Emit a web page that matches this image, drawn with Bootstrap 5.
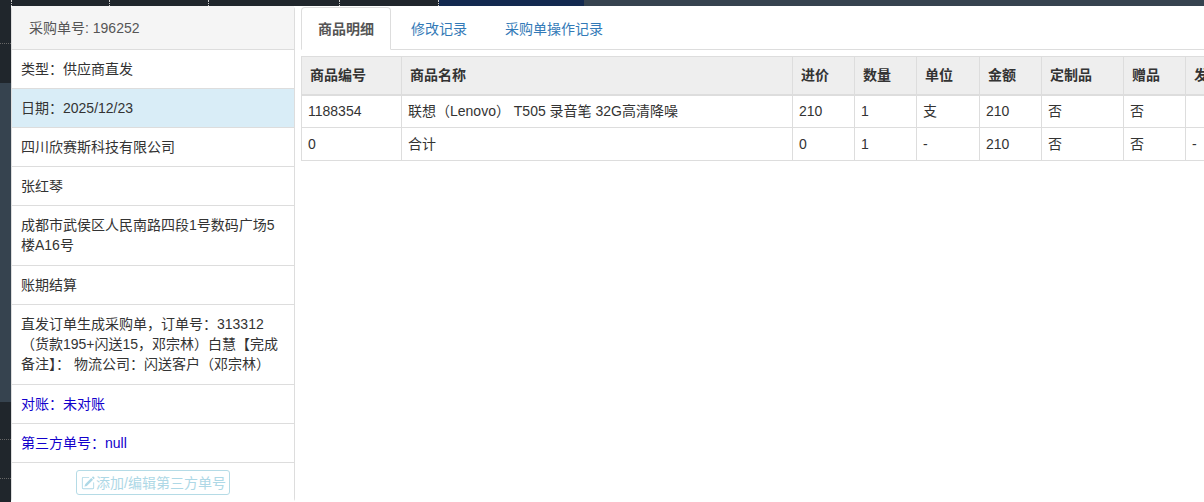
<!DOCTYPE html>
<html lang="en">
<head>
  <meta charset="UTF-8" />
  <meta name="viewport" content="width=device-width, initial-scale=1.0"/>
  <title>采购单详情</title>
  <link href="https://cdn.jsdelivr.net/npm/bootstrap@5.3.0/dist/css/bootstrap.min.css" rel="stylesheet" />
  <style>
    body {
      font-family: "Liberation Sans", "Noto Sans CJK SC", sans-serif;
      font-size: 14px;
      line-height: 20px;
      color: #333;
      background: #fff;
      height: 100vh;
      overflow: hidden;
    }
    /* background app showing round the dialog */
    .top-strip { height: 6px; flex: none; }
    .top-seg { background: #20262c; border-right: 1px dotted #ccc; }
    .seg-a { width: 12px; }
    .seg-b { width: 98px; }
    .seg-c { width: 99px; }
    .seg-d { width: 131px; }
    .seg-e { width: 99px; }
    .seg-navy { width: 145px; background: #13294f; }
    .seg-slate { background: #36434f; }
    .side-strip { width: 11px; flex: none; }
    .strip-dark { background: #20262c; }
    .strip-dots { border-bottom: 1px dotted #666; }
    .strip-slate { background: #36434f; }
    .s-38 { height: 38px; }
    .s-39 { height: 39px; }
    .s-319 { height: 319px; }

    .info-panel {
      width: 284px;
      flex: none;
      --bs-card-border-color: #ddd;
      --bs-card-border-radius: 4px;
      --bs-card-inner-border-radius: 3px;
      border-width: 0 1px 0 1px;
    }
    .info-head {
      background: #f5f5f5;
      padding: 11.5px 17px;
      border-bottom: 1px solid #ddd;
      color: #555;
    }
    .info-panel .list-group-item {
      padding: 9px;
      border-color: #ddd;
      color: #333;
    }
    .info-panel .list-group-item.info-multi { padding-bottom: 10px; }
    .info-panel .info-date { background: #d9edf7; }
    .info-panel .info-blue { color: #1200cc; }
    .edit-btn {
      font-size: 14px;
      line-height: 20px;
      padding: 1.5px 4px;
      width: 154px;
      border: 1px solid #b5dbe6;
      border-radius: 3px;
      background: #fff;
      white-space: nowrap;
    }
    .edit-btn:disabled { color: #aed8e6; border-color: #b5dbe6; opacity: 1; }
    .edit-btn svg { width: 14px; height: 14px; margin-right: 1px; vertical-align: -2px; fill: currentColor; }
    .info-panel .btn-wrap { padding-top: 7px; }

    .detail-pane { padding: 1px 0 0 6px; min-width: 0; }
    .detail-tabs { --bs-nav-tabs-border-color: #ddd; --bs-nav-tabs-border-radius: 4px; margin-bottom: 6px; flex-wrap: nowrap; }
    .detail-tabs .nav-link {
      padding: 10.5px 17px;
      margin-right: 2px;
      color: #337ab7;
      line-height: 20px;
      font-size: 14px;
    }
    .detail-tabs .nav-link.active { color: #555; font-weight: 700; padding: 10.5px 16px; border-color: #ddd #ddd #fff; }
    .goods-table {
      table-layout: fixed;
      width: 966px;
      max-width: none;
      margin: 0;
      --bs-table-border-color: #ddd;
      border-color: #ddd;
      color: #333;
    }
    .goods-table th {
      background: #eee;
      padding: 8px 8px 9px;
      line-height: 20px;
      border-bottom: 2px solid #ddd;
      white-space: nowrap;
      overflow: hidden;
      color: #333;
    }
    .goods-table td { padding: 5px 6px 6px; line-height: 20px; color: #333; }
    .goods-table .total-row td { padding: 6px; }
    .goods-table > :not(caption) > * > * { box-shadow: none; }
    .goods-table > tbody { border-top: 0; }
  </style>
</head>
<body class="d-flex flex-column">
  <!-- background page strips -->
  <div class="top-strip d-flex">
    <div class="top-seg seg-a"></div>
    <div class="top-seg seg-b"></div>
    <div class="top-seg seg-c"></div>
    <div class="top-seg seg-d"></div>
    <div class="top-seg seg-e"></div>
    <div class="seg-navy"></div>
    <div class="seg-slate flex-grow-1"></div>
  </div>
  <div class="d-flex flex-grow-1 overflow-hidden">
    <div class="side-strip d-flex flex-column">
      <div class="strip-dark strip-dots s-38"></div>
      <div class="strip-dark s-39"></div>
      <div class="strip-slate s-319"></div>
      <div class="strip-dark strip-dots s-38"></div>
      <div class="strip-dark strip-dots s-39"></div>
      <div class="strip-dark flex-grow-1"></div>
    </div>

    <!-- left info panel -->
    <div class="card info-panel">
      <div class="info-head">采购单号: 196252</div>
      <ul class="list-group list-group-flush">
        <li class="list-group-item">类型：供应商直发</li>
        <li class="list-group-item info-date">日期：2025/12/23</li>
        <li class="list-group-item">四川欣赛斯科技有限公司</li>
        <li class="list-group-item">张红琴</li>
        <li class="list-group-item info-multi">成都市武侯区人民南路四段1号数码广场5楼A16号</li>
        <li class="list-group-item">账期结算</li>
        <li class="list-group-item info-multi">直发订单生成采购单，订单号：313312（货款195+闪送15，邓宗林）白慧【完成备注】： 物流公司：闪送客户（邓宗林）</li>
        <li class="list-group-item info-blue">对账：未对账</li>
        <li class="list-group-item info-blue">第三方单号：null</li>
        <li class="list-group-item btn-wrap text-center">
          <button class="btn edit-btn" disabled>
            <svg viewBox="0 0 16 16"><path d="M15.502 1.94a.5.5 0 0 1 0 .706L14.459 3.69l-2-2L13.502.646a.5.5 0 0 1 .707 0l1.293 1.293zm-1.75 2.456-2-2L4.939 9.21a.5.5 0 0 0-.121.196l-.805 2.414a.25.25 0 0 0 .316.316l2.414-.805a.5.5 0 0 0 .196-.12l6.813-6.814z"/><path fill-rule="evenodd" d="M1 13.5A1.5 1.5 0 0 0 2.5 15h11a1.5 1.5 0 0 0 1.5-1.5v-6a.5.5 0 0 0-1 0v6a.5.5 0 0 1-.5.5h-11a.5.5 0 0 1-.5-.5v-11a.5.5 0 0 1 .5-.5H9a.5.5 0 0 0 0-1H2.5A1.5 1.5 0 0 0 1 2.5v11z"/></svg>添加/编辑第三方单号
          </button>
        </li>
      </ul>
    </div>

    <!-- right detail -->
    <div class="detail-pane flex-grow-1 overflow-hidden">
      <ul class="nav nav-tabs detail-tabs">
        <li class="nav-item"><a class="nav-link active" href="#">商品明细</a></li>
        <li class="nav-item"><a class="nav-link" href="#">修改记录</a></li>
        <li class="nav-item"><a class="nav-link" href="#">采购单操作记录</a></li>
      </ul>
      <table class="table table-bordered goods-table">
        <colgroup>
          <col width="100"><col width="391"><col width="62"><col width="62"><col width="63"><col width="62"><col width="82"><col width="62"><col width="82">
        </colgroup>
        <thead>
          <tr><th>商品编号</th><th>商品名称</th><th>进价</th><th>数量</th><th>单位</th><th>金额</th><th>定制品</th><th>赠品</th><th>发货</th></tr>
        </thead>
        <tbody>
          <tr><td>1188354</td><td>联想（Lenovo） T505 录音笔 32G高清降噪</td><td>210</td><td>1</td><td>支</td><td>210</td><td>否</td><td>否</td><td></td></tr>
          <tr class="total-row"><td>0</td><td>合计</td><td>0</td><td>1</td><td>-</td><td>210</td><td>否</td><td>否</td><td>-</td></tr>
        </tbody>
      </table>
    </div>
  </div>
  <script src="https://cdn.jsdelivr.net/npm/bootstrap@5.3.0/dist/js/bootstrap.bundle.min.js"></script>
</body>
</html>
